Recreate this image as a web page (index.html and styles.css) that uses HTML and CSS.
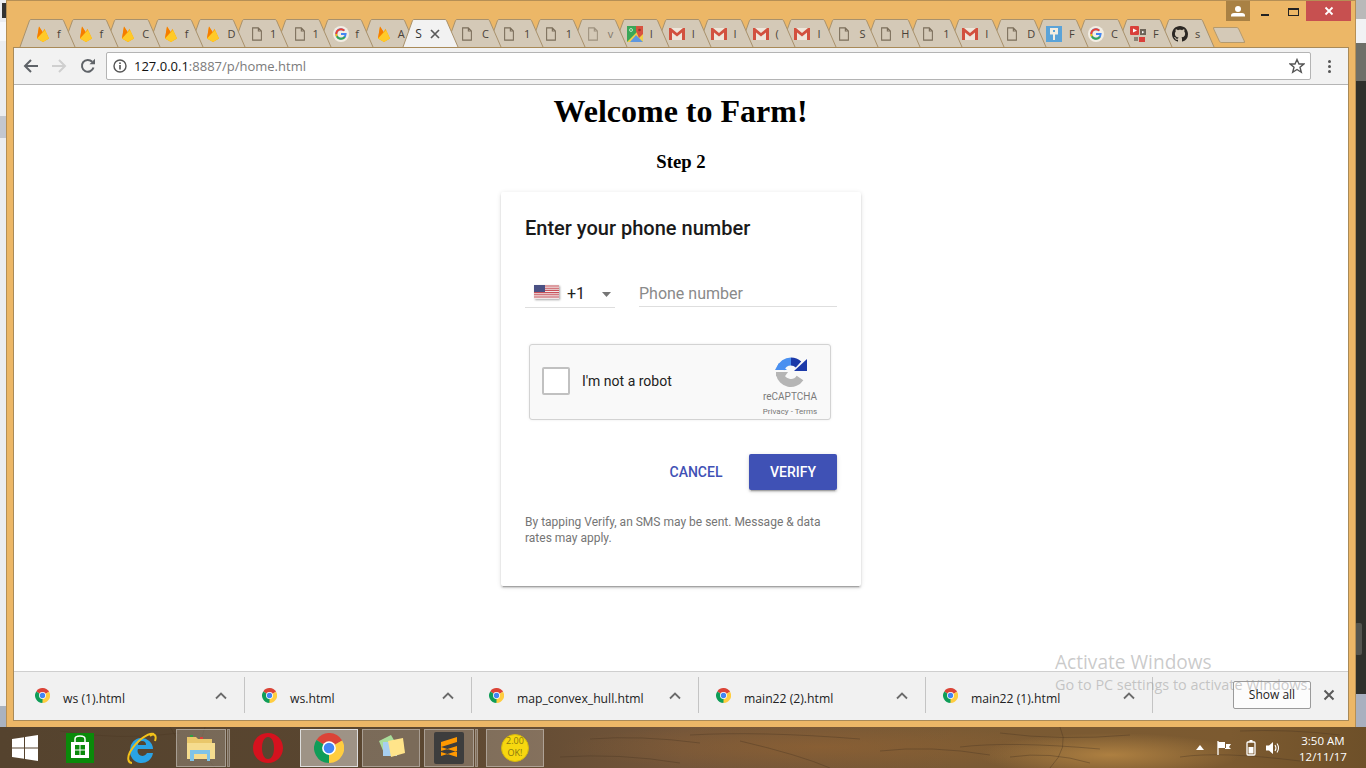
FILE: index.html
```html
<!DOCTYPE html>
<html lang="en">
<head>
<meta charset="utf-8">
<title>Welcome to Farm!</title>
<link rel="stylesheet" href="styles.css">
</head>
<body>
<svg class="defs" width="0" height="0" aria-hidden="true">
  <defs>
    <symbol id="tabshape" viewBox="0 0 58 28">
      <path d="M1 28L10.500 1.500Q11 .5 12 .5H43Q44 .5 44.500 1.500L56 28" />
    </symbol>
    <symbol id="fire" viewBox="0 0 16 20">
      <path d="M.5 15.500L3 .5 7.500 7.500 9.800 3.500 15.500 15.500 8 20Z" fill="#ffa000"/>
      <path d="M.5 15.500L3 .5 7.500 7.500 4 12Z" fill="#f57c00"/>
      <path d="M.5 15.500L10.500 5 15.500 15.500 8 20Z" fill="#ffca28"/>
    </symbol>
    <symbol id="doc" viewBox="0 0 12 16">
      <path d="M1 1H7.500L11 4.500V15H1Z M7.500 1V4.500H11" fill="none" stroke="#7a6d5a" stroke-width="1.200"/>
    </symbol>
    <symbol id="gg" viewBox="0 0 18 18">
      <circle cx="9" cy="9" r="9" fill="#f3eee4"/>
      <path d="M9 9h5.200a5.300 5.300 0 1 1-1.500-3.800" fill="none" stroke="#4285f4" stroke-width="2.200"/>
      <path d="M3.700 9a5.300 5.300 0 0 1 9-3.800" fill="none" stroke="#ea4335" stroke-width="2.200"/>
      <path d="M4.300 11.500a5.300 5.300 0 0 0 9 .8" fill="none" stroke="#34a853" stroke-width="2.200"/>
      <path d="M3.700 9a5.300 5.300 0 0 0 .6 2.500" fill="none" stroke="#fbbc05" stroke-width="2.200"/>
    </symbol>
    <symbol id="gmail" viewBox="0 0 16 12">
      <rect x="0" y="0" width="16" height="12" fill="#eee6da"/>
      <path d="M0 12V0H2L8 5 14 0H16V12H13V4.500L8 8.500 3 4.500V12Z" fill="#d2513f"/>
    </symbol>
    <symbol id="maps" viewBox="0 0 16 16">
      <rect width="16" height="16" fill="#3aa757"/>
      <path d="M0 16L16 0V16Z" fill="#f2cf4a"/>
      <path d="M3 16L9 9 16 16Z" fill="#5e97e0"/>
      <path d="M9 0H16V8L12 12 9 5Z" fill="#d8523f"/>
      <circle cx="12.500" cy="4" r="1.300" fill="#9c3528"/>
      <circle cx="4" cy="4" r="1.500" fill="none" stroke="#d7eed9" stroke-width=".8"/>
    </symbol>
    <symbol id="pblue" viewBox="0 0 16 16">
      <rect width="16" height="16" fill="#5ba3d8"/>
      <path d="M4 2H12V8.500H9V14H7V8.500H4Z" fill="#f4ede0"/>
      <rect x="7" y="4" width="2" height="2" fill="#5ba3d8"/>
    </symbol>
    <symbol id="redbox" viewBox="0 0 16 16">
      <rect x="0" y="0" width="9" height="9" rx="1" fill="#d9403a"/>
      <rect x="10" y="3" width="6" height="6" fill="#6d6458"/>
      <rect x="4" y="11" width="4" height="4" fill="#8a8274"/>
      <rect x="9" y="11" width="6" height="5" fill="#d9403a"/>
      <path d="M3 2.500L7 4.500 3 6.500Z" fill="#fff"/>
      <path d="M12 5L14.500 6 12 7.500Z" fill="#fff"/>
    </symbol>
    <symbol id="github" viewBox="0 0 16 16">
      <path fill="#2b2723" d="M8 0C3.580 0 0 3.580 0 8c0 3.540 2.290 6.530 5.470 7.590.4.070.55-.17.55-.38 0-.19-.01-.82-.01-1.490-2.010.37-2.530-.49-2.690-.94-.09-.23-.48-.94-.82-1.130-.28-.15-.68-.52-.01-.53.63-.01 1.080.58 1.230.82.72 1.210 1.870.87 2.330.66.070-.52.280-.87.510-1.070-1.780-.2-3.640-.89-3.640-3.950 0-.87.310-1.590.82-2.150-.08-.2-.36-1.020.08-2.120 0 0 .67-.21 2.200.82.64-.18 1.320-.27 2-.27s1.360.09 2 .27c1.530-1.040 2.200-.82 2.200-.82.44 1.100.16 1.920.08 2.120.51.56.82 1.270.82 2.150 0 3.070-1.870 3.750-3.650 3.950.29.25.54.73.54 1.480 0 1.070-.01 1.930-.01 2.200 0 .21.15.46.55.38A8.010 8.010 0 0 0 16 8c0-4.420-3.580-8-8-8z"/>
    </symbol>
    <symbol id="chrome" viewBox="0 0 48 48">
      <path d="M24 24 L45 12 A24 24 0 0 0 4 11Z" fill="#db4437"/>
      <path d="M24 24 L4 11 A24 24 0 0 0 24 48 L36 27Z" fill="#0f9d58"/>
      <path d="M24 24 L45 12 A24 24 0 0 1 24 48Z" fill="#ffcd40"/>
      <circle cx="24" cy="24" r="11" fill="#fff"/>
      <circle cx="24" cy="24" r="8.500" fill="#4285f4"/>
    </symbol>
    <symbol id="chev" viewBox="0 0 12 8">
      <path d="M1 6.500L6 1.500 11 6.500" fill="none" stroke="#6b6b6b" stroke-width="1.800"/>
    </symbol>
  </defs>
</svg>

<div class="desktop">
  <div class="strip-left">
    <span class="sl-a"></span><span class="sl-b"></span><span class="sl-c"></span><span class="sl-d"></span>
  </div>
  <div class="strip-right">
    <span class="sr-a"></span><span class="sr-b"></span><span class="sr-c"></span><span class="sr-d"></span><span class="sr-e"></span><span class="sr-f"></span>
  </div>

  <div class="window">
    <div class="captions">
      <span class="cap-user"><svg width="14" height="11" viewBox="0 0 14 11"><circle cx="7" cy="3" r="3" fill="#fff"/><path d="M0 10.500V9.500Q0 7 3 7H11Q14 7 14 9.500V10.500Z" fill="#fff"/></svg></span>
      <span class="cap-min"><svg width="8" height="2" viewBox="0 0 8 2"><rect width="8" height="2" fill="#222"/></svg></span>
      <span class="cap-max"><svg width="11" height="8" viewBox="0 0 11 8"><rect x=".5" y=".5" width="10" height="7" fill="none" stroke="#222"/><rect width="11" height="2" fill="#222"/></svg></span>
      <span class="cap-close"><svg width="10" height="10" viewBox="0 0 10 10"><path d="M1.500 1.500L8.500 8.500M8.500 1.500L1.500 8.500" stroke="#fff" stroke-width="1.800"/></svg></span>
    </div>

    <div class="tabstrip">
      <div class="tab"><svg class="shape"><use href="#tabshape"/></svg><svg class="fav f16"><use href="#fire"/></svg><span class="tt">f</span></div>
      <div class="tab"><svg class="shape"><use href="#tabshape"/></svg><svg class="fav f16"><use href="#fire"/></svg><span class="tt">f</span></div>
      <div class="tab"><svg class="shape"><use href="#tabshape"/></svg><svg class="fav f16"><use href="#fire"/></svg><span class="tt">C</span></div>
      <div class="tab"><svg class="shape"><use href="#tabshape"/></svg><svg class="fav f16"><use href="#fire"/></svg><span class="tt">f</span></div>
      <div class="tab"><svg class="shape"><use href="#tabshape"/></svg><svg class="fav f16"><use href="#fire"/></svg><span class="tt">D</span></div>
      <div class="tab"><svg class="shape"><use href="#tabshape"/></svg><svg class="fav fdoc"><use href="#doc"/></svg><span class="tt">1</span></div>
      <div class="tab"><svg class="shape"><use href="#tabshape"/></svg><svg class="fav fdoc"><use href="#doc"/></svg><span class="tt">1</span></div>
      <div class="tab"><svg class="shape"><use href="#tabshape"/></svg><svg class="fav f16"><use href="#gg"/></svg><span class="tt">f</span></div>
      <div class="tab"><svg class="shape"><use href="#tabshape"/></svg><svg class="fav f16"><use href="#fire"/></svg><span class="tt">A</span></div>
      <div class="tab tab-active"><svg class="shape"><use href="#tabshape"/></svg><span class="tt tt-active">S</span><svg class="tabx" width="10" height="10" viewBox="0 0 10 10"><path d="M1 1L9 9M9 1L1 9" stroke="#5a5a5a" stroke-width="1.700"/></svg></div>
      <div class="tab tab-r"><svg class="shape"><use href="#tabshape"/></svg><svg class="fav fdoc"><use href="#doc"/></svg><span class="tt">C</span></div>
      <div class="tab tab-r"><svg class="shape"><use href="#tabshape"/></svg><svg class="fav fdoc"><use href="#doc"/></svg><span class="tt">1</span></div>
      <div class="tab tab-r"><svg class="shape"><use href="#tabshape"/></svg><svg class="fav fdoc"><use href="#doc"/></svg><span class="tt">1</span></div>
      <div class="tab tab-r tab-faded"><svg class="shape"><use href="#tabshape"/></svg><svg class="fav fdoc"><use href="#doc"/></svg><span class="tt">v</span></div>
      <div class="tab tab-r"><svg class="shape"><use href="#tabshape"/></svg><svg class="fav f16"><use href="#maps"/></svg><span class="tt">I</span></div>
      <div class="tab tab-r"><svg class="shape"><use href="#tabshape"/></svg><svg class="fav f16"><use href="#gmail"/></svg><span class="tt">I</span></div>
      <div class="tab tab-r"><svg class="shape"><use href="#tabshape"/></svg><svg class="fav f16"><use href="#gmail"/></svg><span class="tt">I</span></div>
      <div class="tab tab-r"><svg class="shape"><use href="#tabshape"/></svg><svg class="fav f16"><use href="#gmail"/></svg><span class="tt">(</span></div>
      <div class="tab tab-r"><svg class="shape"><use href="#tabshape"/></svg><svg class="fav f16"><use href="#gmail"/></svg><span class="tt">I</span></div>
      <div class="tab tab-r"><svg class="shape"><use href="#tabshape"/></svg><svg class="fav fdoc"><use href="#doc"/></svg><span class="tt">S</span></div>
      <div class="tab tab-r"><svg class="shape"><use href="#tabshape"/></svg><svg class="fav fdoc"><use href="#doc"/></svg><span class="tt">H</span></div>
      <div class="tab tab-r"><svg class="shape"><use href="#tabshape"/></svg><svg class="fav fdoc"><use href="#doc"/></svg><span class="tt">1</span></div>
      <div class="tab tab-r"><svg class="shape"><use href="#tabshape"/></svg><svg class="fav f16"><use href="#gmail"/></svg><span class="tt">I</span></div>
      <div class="tab tab-r"><svg class="shape"><use href="#tabshape"/></svg><svg class="fav fdoc"><use href="#doc"/></svg><span class="tt">D</span></div>
      <div class="tab tab-r"><svg class="shape"><use href="#tabshape"/></svg><svg class="fav f16"><use href="#pblue"/></svg><span class="tt">F</span></div>
      <div class="tab tab-r"><svg class="shape"><use href="#tabshape"/></svg><svg class="fav f16"><use href="#gg"/></svg><span class="tt">C</span></div>
      <div class="tab tab-r"><svg class="shape"><use href="#tabshape"/></svg><svg class="fav f16"><use href="#redbox"/></svg><span class="tt">F</span></div>
      <div class="tab tab-r"><svg class="shape"><use href="#tabshape"/></svg><svg class="fav f16"><use href="#github"/></svg><span class="tt">s</span></div>
      <div class="newtab"></div>
    </div>

    <div class="client">
      <div class="toolbar">
        <div class="navs">
          <svg width="16" height="16" viewBox="0 0 16 16"><path d="M15 8H2.500M8 2L2 8 8 14" fill="none" stroke="#5f6368" stroke-width="2"/></svg>
          <svg width="16" height="16" viewBox="0 0 16 16"><path d="M1 8H13.500M8 2L14 8 8 14" fill="none" stroke="#cfcfcf" stroke-width="2"/></svg>
          <svg width="16" height="16" viewBox="0 0 16 16"><path d="M13.500 9.500A5.900 5.900 0 1 1 12.200 3.800" fill="none" stroke="#5f6368" stroke-width="2"/><path d="M9.500 6.200H15V.7Z" fill="#5f6368"/></svg>
        </div>
        <div class="omnibox">
          <svg class="info" width="14" height="14" viewBox="0 0 14 14"><circle cx="7" cy="7" r="6" fill="none" stroke="#555" stroke-width="1.400"/><rect x="6.200" y="6" width="1.600" height="4.500" fill="#555"/><rect x="6.200" y="3.400" width="1.600" height="1.600" fill="#555"/></svg>
          <span class="url"><span class="host">127.0.0.1</span>:8887/p/home.html</span>
          <svg class="star" width="16" height="16" viewBox="0 0 16 16"><path d="M8 1.500L10 6H14.800L11 9.200 12.300 14.300 8 11.500 3.700 14.300 5 9.200 1.200 6H6Z" fill="none" stroke="#555" stroke-width="1.400"/></svg>
        </div>
        <div class="menu"><i></i><i></i><i></i></div>
      </div>

      <main class="page">
        <h1 class="title">Welcome to Farm!</h1>
        <h3 class="step">Step 2</h3>
        <section class="card">
          <h2 class="card-title">Enter your phone number</h2>
          <div class="phone-row">
            <div class="country">
              <svg class="flag" width="25" height="14" viewBox="0 0 25 14">
                <rect width="25" height="14" fill="#f0e9e9"/>
                <path d="M0 1H25M0 3.200H25M0 5.400H25M0 7.600H25M0 9.800H25M0 12H25" stroke="#c9525a" stroke-width="1.100"/>
                <rect width="11" height="7" fill="#4a5184"/>
              </svg>
              <span class="code">+1</span>
              <svg class="caret" width="9" height="5" viewBox="0 0 9 5"><path d="M0 0H9L4.500 5Z" fill="#757575"/></svg>
            </div>
            <div class="phone-field">Phone number</div>
          </div>
          <div class="captcha">
            <span class="cbox"></span>
            <span class="robot">I'm not a robot</span>
            <div class="cap-brand">
              <svg class="cap-logo" width="32" height="32" viewBox="0 0 32 32">
                <path d="M5.500 13A11 11 0 0 1 16 5.500" fill="none" stroke="#4a90f0" stroke-width="8"/>
                <path d="M0 14L4 7 12 14Z" fill="#4a90f0"/>
                <path d="M16 5.500A11 11 0 0 1 23.500 8.500" fill="none" stroke="#1c3aa9" stroke-width="8"/>
                <path d="M32 3V15H19Z" fill="#1c3aa9"/>
                <path d="M5 18A11 11 0 0 0 25 22" fill="none" stroke="#b5b5b5" stroke-width="8"/>
                <path d="M1 16H13L8 23 1 20Z" fill="#b5b5b5"/>
              </svg>
              <span class="cap-name">reCAPTCHA</span>
              <span class="cap-links">Privacy - Terms</span>
            </div>
          </div>
          <div class="actions">
            <button class="btn-cancel" type="button">CANCEL</button>
            <button class="btn-verify" type="button">VERIFY</button>
          </div>
          <p class="tos">By tapping Verify, an SMS may be sent. Message &amp; data rates may apply.</p>
        </section>
      </main>

      <footer class="shelf">
        <div class="dl"><svg class="dl-icon"><use href="#chrome"/></svg><span class="dl-name">ws (1).html</span><svg class="dl-chev"><use href="#chev"/></svg></div>
        <div class="dl"><svg class="dl-icon"><use href="#chrome"/></svg><span class="dl-name">ws.html</span><svg class="dl-chev"><use href="#chev"/></svg></div>
        <div class="dl"><svg class="dl-icon"><use href="#chrome"/></svg><span class="dl-name">map_convex_hull.html</span><svg class="dl-chev"><use href="#chev"/></svg></div>
        <div class="dl"><svg class="dl-icon"><use href="#chrome"/></svg><span class="dl-name">main22 (2).html</span><svg class="dl-chev"><use href="#chev"/></svg></div>
        <div class="dl"><svg class="dl-icon"><use href="#chrome"/></svg><span class="dl-name">main22 (1).html</span><svg class="dl-chev"><use href="#chev"/></svg></div>
        <div class="shelf-end">
          <button class="showall" type="button">Show all</button>
          <svg width="12" height="12" viewBox="0 0 12 12"><path d="M1.500 1.500L10.500 10.500M10.500 1.500L1.500 10.500" stroke="#5a5a5a" stroke-width="2"/></svg>
        </div>
      </footer>
    </div>
  </div>

  <div class="watermark">
    <div class="wm-1">Activate Windows</div>
    <div class="wm-2">Go to PC settings to activate Windows.</div>
  </div>

  <div class="taskbar">
    <svg class="grass" width="1366" height="41" viewBox="0 0 1366 41">
      <path d="M170 0Q185 20 178 41M205 0Q195 20 215 41M60 4Q120 14 180 6M690 8Q760 4 860 12M740 14Q800 28 830 41M1000 6Q1060 14 1130 8M960 20Q1010 14 1100 22M1240 4Q1290 2 1340 8M1180 30Q1220 24 1300 34M1060 0Q1070 20 1050 41M590 12Q640 8 700 16M880 24Q930 18 990 28M560 30Q620 26 680 36M1010 30Q1050 24 1090 36" fill="none" stroke="#4a3722" stroke-width="1" opacity=".4"/>
    </svg>
    <div class="tb-start"><svg width="26" height="26" viewBox="0 0 26 26"><path d="M0 4L12 2.300V12.400H0ZM13 2.100L26 0V12.400H13ZM0 13.500H12V23.700L0 22ZM13 13.500H26V26L13 23.900Z" fill="#fff"/></svg></div>
    <div class="tb-item tb-store"><svg width="29" height="30" viewBox="0 0 28 30"><rect width="28" height="30" fill="#0a8a0a"/><path d="M9 9V6Q9 3 14 3T19 6V9" fill="none" stroke="#fff" stroke-width="1.500"/><path d="M5 9H23V25H5Z" fill="#fff"/><path d="M9 12H13.500V16.500H9ZM14.500 12H19V16.500H14.500ZM9 17.500H13.500V22H9ZM14.500 17.500H19V22H14.500Z" fill="#0a8a0a"/></svg></div>
    <div class="tb-item tb-ie"><svg width="30" height="32" viewBox="0 0 30 32"><path d="M3 18A11.500 11.500 0 0 1 26 17H11A4.500 4.500 0 0 0 20 21H26A11.500 11.500 0 0 1 3 18Z M11 13H19A4 4 0 0 0 11 13Z" fill="#2aa3e6" fill-rule="evenodd"/><path d="M27 2C22 0 10 8 3 20 0 26 1 31 5 31" fill="none" stroke="#f3c21a" stroke-width="2"/><path d="M23 4C27 1 30 3 28 9" fill="none" stroke="#f3c21a" stroke-width="2"/></svg></div>
    <div class="tb-btn tb-explorer"><svg width="30" height="30" viewBox="0 0 30 30"><path d="M1 4H10L12 6H26V22H1Z" fill="#e9c76a"/><rect x="4" y="2" width="3" height="2" fill="#2f9e44"/><rect x="14" y="4" width="3" height="2" fill="#d9403a"/><path d="M1 10H29V26H1Z" fill="#f5dc8e"/><path d="M4 17H24V28H21V21H8V28H4Z" fill="#7ec3e8"/></svg></div>
    <span class="tb-tick"></span>
    <div class="tb-item tb-opera"><svg width="30" height="32" viewBox="0 0 30 32"><path d="M15 1C6 1 0 8 0 16S6 31 15 31 30 24 30 16 24 1 15 1ZM15 5C19 5 21 10 21 16S19 27 15 27 9 22 9 16 11 5 15 5Z" fill="#d5121e" fill-rule="evenodd"/></svg></div>
    <div class="tb-btn tb-active"><svg width="30" height="30"><use href="#chrome"/></svg></div>
    <div class="tb-btn tb-notes"><svg width="30" height="26" viewBox="0 0 30 26"><path d="M3 6L15 0 22 12 8 18Z" fill="#a9dd9a"/><rect x="7" y="7" width="14" height="14" fill="#a8cff0"/><path d="M12 6L27 3 29 18 15 22Z" fill="#ffe48a"/></svg></div>
    <div class="tb-btn tb-sublime"><svg width="30" height="32" viewBox="0 0 30 32"><rect width="30" height="32" rx="2" fill="#3d3d3d"/><path d="M7 10L23 5V10L7 15ZM7 15L23 20V25L7 20ZM23 14L7 19V24L23 19Z" fill="#ff9800"/></svg></div>
    <span class="tb-tick"></span>
    <div class="tb-btn tb-ok"><span class="ok-coin">2.00<br>OK!</span></div>
    <div class="tray">
      <svg width="8" height="5" viewBox="0 0 8 5"><path d="M0 5L4 0 8 5Z" fill="#fff"/></svg>
      <svg width="16" height="14" viewBox="0 0 16 14"><path d="M2 0V14" stroke="#fff" stroke-width="1.300"/><path d="M2 1H9V7H2ZM10 3H15L13 6 15 8H9V7H10Z" fill="#fff"/></svg>
      <svg class="tray-batt" width="10" height="16" viewBox="0 0 10 16"><rect x="1" y="2" width="8" height="13" rx="1" fill="none" stroke="#fff" stroke-width="1.300"/><rect x="3.500" y="0" width="3" height="2" fill="#fff"/><rect x="2.500" y="7" width="5" height="6.500" fill="#fff"/></svg>
      <svg width="15" height="14" viewBox="0 0 15 14"><path d="M0 4.500H3L7 1V13L3 9.500H0Z" fill="#fff"/><path d="M9 4Q11 7 9 10M11 2.500Q14 7 11 11.500" fill="none" stroke="#fff" stroke-width="1.100"/></svg>
      <div class="clock"><span>3:50 AM</span><span>12/11/17</span></div>
    </div>
  </div>
</div>
</body>
</html>
```

FILE: styles.css
```css
* { box-sizing: border-box; }
html, body { margin: 0; padding: 0; width: 1366px; height: 768px; overflow: hidden; }
body { font-family: "Roboto", sans-serif; background: #eef0f4; }
.defs { position: absolute; }

.desktop { position: relative; width: 1366px; height: 768px; overflow: hidden; background: #f0f1f4; }

/* desktop slivers visible round the window */
.strip-left { position: absolute; left: 0; top: 0; width: 7px; height: 727px; background: #ebedf1; }
.strip-left span { position: absolute; display: block; }
.sl-a { left: 2px; top: 3px; width: 5px; height: 15px; background: #333; }
.sl-b { left: 0; top: 22px; width: 7px; height: 19px; background: #f7f8fa; }
.sl-c { left: 0; top: 116px; width: 7px; height: 22px; background: #c3c7d0; }
.sl-d { left: 0; top: 706px; width: 7px; height: 21px; background: #a9b2c0; }

.strip-right { position: absolute; right: 0; top: 0; width: 11px; height: 727px; background: #f4f5f7; }
.strip-right span { position: absolute; display: block; left: 0; width: 11px; }
.sr-a { top: 0; height: 19px; background: #b9b9b9; }
.sr-b { top: 19px; height: 24px; background: #f1f2f4; }
.sr-c { top: 43px; height: 38px; background: #6e6f68; }
.sr-d { top: 81px; height: 613px; background: #2f302b; }
.strip-right .sr-e { top: 623px; height: 32px; width: 7px; background: #54554f; border-radius: 2px; }
.sr-f { top: 694px; height: 33px; background: #a9b0bf; }

/* window */
.window {
  position: absolute; left: 6px; top: 0; width: 1350px; height: 728px;
  background: #ecb767; border: 1px solid #b58f55; border-bottom-color: #d8a358;
}
.captions { position: absolute; right: 4px; top: 0; display: flex; height: 20px; z-index: 60; }
.cap-user { width: 24px; height: 20px; background: #a98144; display: flex; align-items: center; justify-content: center; }
.cap-min { width: 30px; height: 20px; display: flex; align-items: flex-end; justify-content: center; padding-bottom: 5px; }
.cap-max { width: 26px; height: 20px; display: flex; align-items: center; justify-content: center; padding-top: 2px; }
.cap-close { width: 45px; height: 20px; background: #c75050; display: flex; align-items: center; justify-content: center; }

.tabstrip { display: flex; position: absolute; left: 12px; top: 18px; height: 28px; z-index: 2; }
.tab { position: relative; width: 42.6px; height: 28px; flex: none; }
.tab-r { width: 41.95px; }
.shape { position: absolute; left: 0; top: 0; width: 58px; height: 28px; fill: #d4c9b7; stroke: #a8916c; stroke-width: 1; }
.tab:nth-child(1) { z-index: 40; } .tab:nth-child(2) { z-index: 39; } .tab:nth-child(3) { z-index: 38; }
.tab:nth-child(4) { z-index: 37; } .tab:nth-child(5) { z-index: 36; } .tab:nth-child(6) { z-index: 35; }
.tab:nth-child(7) { z-index: 34; } .tab:nth-child(8) { z-index: 33; } .tab:nth-child(9) { z-index: 32; }
.tab:nth-child(10) { z-index: 50; } .tab:nth-child(11) { z-index: 30; } .tab:nth-child(12) { z-index: 29; }
.tab:nth-child(13) { z-index: 28; } .tab:nth-child(14) { z-index: 27; } .tab:nth-child(15) { z-index: 26; }
.tab:nth-child(16) { z-index: 25; } .tab:nth-child(17) { z-index: 24; } .tab:nth-child(18) { z-index: 23; }
.tab:nth-child(19) { z-index: 22; } .tab:nth-child(20) { z-index: 21; } .tab:nth-child(21) { z-index: 20; }
.tab:nth-child(22) { z-index: 19; } .tab:nth-child(23) { z-index: 18; } .tab:nth-child(24) { z-index: 17; }
.tab:nth-child(25) { z-index: 16; } .tab:nth-child(26) { z-index: 15; } .tab:nth-child(27) { z-index: 14; }
.tab:nth-child(28) { z-index: 13; }
.tab-active .shape { fill: #f2f2f2; }
.tab-faded .fav, .tab-faded .tt { opacity: .6; }
.fav { position: absolute; }
.f16 { left: 16px; width: 16px; height: 16px; top: 7px; }
.fdoc { left: 19px; top: 8px; width: 12px; height: 14px; }
.tab-r .f16 { left: 14px; }
.tab-r .fdoc { left: 16px; }
.tt { position: absolute; left: 38px; top: 7px; font: 11px/16px "Open Sans", sans-serif; color: #4a4238; }
.tab-r .tt { left: 37px; }
.tab .tt-active { left: 13px; font-size: 12px; color: #333; }
.tabx { position: absolute; left: 28px; top: 10px; }
.newtab {
  position: relative; z-index: 1; flex: none; width: 26px; height: 16px; margin-left: 16px; margin-top: 8px;
  background: #d4c9b7; border: 1px solid #b49a6e; border-radius: 2px; transform: skewX(25deg);
}

/* client */
.client {
  position: absolute; left: 6px; top: 46px; width: 1336px; height: 674px;
  display: flex; flex-direction: column; background: #fff;
  border: 1px solid #a98a58;
}
.toolbar {
  position: relative; z-index: 3; flex: none; height: 37px; background: #f2f2f2; border-bottom: 1px solid #b5b5b5;
  display: flex; align-items: center; padding: 0 0 0 9px;
}
.navs { display: flex; gap: 12px; width: 83px; flex: none; }
.navs svg:last-child { margin-left: 1px; }
.omnibox {
  flex: none; width: 1205px; height: 28px; background: #fff; border: 1px solid #b4b4b4; border-radius: 2px;
  display: flex; align-items: center; padding: 0 5px 0 6px;
}
.info { flex: none; margin-right: 7px; }
.url { flex: 1; font: 13px/20px "Open Sans", sans-serif; color: #7b7b7b; white-space: nowrap; }
.host { color: #111; }
.star { flex: none; }
.menu { display: flex; flex-direction: column; gap: 2px; margin-left: 17px; }
.menu i { display: block; width: 3px; height: 3px; border-radius: 50%; background: #555; }

.page { flex: 1; min-height: 0; background: #fff; display: flex; flex-direction: column; align-items: center; }
.title { margin: 8px 1px 0 0; font: bold 32px/37px "Liberation Serif", serif; color: #000; }
.step { margin: 21px 0 0; font: bold 18.720px/22px "Liberation Serif", serif; color: #000; }
.card {
  margin-top: 19px; width: 360px; height: 394px; padding: 24px; background: #fff; border-radius: 2px;
  box-shadow: 0 2px 2px 0 rgba(0,0,0,.14), 0 3px 1px -2px rgba(0,0,0,.2), 0 1px 5px 0 rgba(0,0,0,.12);
}
.card-title { margin: 0; font: 500 20px/24px "Roboto", sans-serif; color: #1a1a1a; }
.phone-row { display: flex; gap: 24px; margin-top: 38px; height: 30px; }
.country {
  width: 90px; height: 29px; margin-top: 1px; border-bottom: 1px solid #dedede; display: flex; align-items: center; padding-left: 9px;
}
.flag { flex: none; box-shadow: 1px 1px 2px rgba(0,0,0,.35); margin-top: -3px; }
.code { margin-left: 8px; font: 16px/20px "Roboto", sans-serif; color: #222; margin-top: 1px; }
.caret { margin-left: 17px; margin-top: 3px; }
.phone-field {
  width: 198px; height: 29px; padding-top: 2px; border-bottom: 1px solid #dedede; font: 16px/28px "Roboto", sans-serif; color: #8a8a8a;
}
.captcha {
  position: relative; margin: 36px 0 0 4px; width: 302px; height: 76px; background: #f9f9f9; border: 1px solid #d3d3d3; border-radius: 3px;
  box-shadow: 0 0 3px rgba(0,0,0,.08); display: flex; align-items: center; padding-bottom: 2px;
}
.cbox { flex: none; width: 28px; height: 28px; margin-left: 12px; background: #fff; border: 2px solid #c1c1c1; border-radius: 2px; }
.robot { margin-left: 12px; font: 14px/18px "Roboto", sans-serif; color: #222; }
.cap-brand {
  position: absolute; right: 12px; top: 11px; width: 56px; display: flex; flex-direction: column; align-items: center;
}
.cap-logo { margin-left: 2px; }
.cap-name { margin-top: 3px; font: 10px/12px "Roboto", sans-serif; color: #7b7b7b; }
.cap-links { margin-top: 4px; font: 8px/10px "Roboto", sans-serif; color: #777; white-space: nowrap; }
.actions { display: flex; justify-content: flex-end; align-items: center; margin-top: 34px; height: 36px; }
.btn-cancel, .btn-verify { font: 500 14px/36px "Roboto", sans-serif; height: 36px; padding: 0 0 1px; border: 0; border-radius: 2px; }
.btn-cancel { background: transparent; color: #3f51b5; width: 70px; margin-right: 18px; }
.btn-verify { width: 88px; background: #3f51b5; color: #fff; box-shadow: 0 2px 2px 0 rgba(0,0,0,.14), 0 3px 1px -2px rgba(0,0,0,.2), 0 1px 5px 0 rgba(0,0,0,.12); }
.tos { margin: 24px 0 0; font: 12px/16px "Roboto", sans-serif; color: #757575; }

/* download shelf */
.shelf {
  flex: none; height: 49px; background: #f1f1f1; border-top: 1px solid #cfcfcf; display: flex; align-items: center; padding-left: 4px; position: relative; padding-bottom: 3px;
}
.dl { position: relative; flex: none; width: 227px; height: 36px; border-right: 1px solid #c4c4c4; display: flex; align-items: center; }
.dl-icon { position: absolute; left: 17px; top: 11px; width: 15px; height: 15px; }
.dl-name { position: absolute; left: 45px; top: 13px; font: 12.200px/18px "Open Sans", sans-serif; color: #222; white-space: nowrap; }
.dl-chev { position: absolute; left: 197px; top: 15px; width: 12px; height: 8px; }
.shelf-end { display: flex; align-items: center; gap: 12px; margin-left: 80px; }
.showall { width: 78px; height: 28px; padding: 0; background: #fcfcfc; border: 1px solid #9a9a9a; border-radius: 2px; font: 12px/24px "Open Sans", sans-serif; color: #222; }

/* watermark */
.watermark { position: absolute; left: 1055px; top: 650px; z-index: 20; pointer-events: none; font-family: "Open Sans", sans-serif; color: rgba(150,150,150,.5); white-space: nowrap; }
.wm-1 { font-size: 19.100px; line-height: 25px; }
.wm-2 { font-size: 14.400px; line-height: 20px; }

/* taskbar */
.taskbar {
  position: absolute; left: 0; top: 727px; width: 1366px; height: 41px; display: flex; align-items: center;
  background:
    radial-gradient(ellipse 130px 22px at 1110px 28px, rgba(190,140,70,.75), rgba(190,140,70,0) 100%),
    radial-gradient(ellipse 260px 24px at 820px 20px, rgba(150,100,50,.55), rgba(150,100,50,0) 100%),
    linear-gradient(90deg, #55432e 0%, #5a4630 30%, #74563a 50%, #7a5a34 70%, #7c5a30 90%, #6e5029 100%);
}
.grass { position: absolute; left: 0; top: 0; }
.tb-start { position: relative; width: 26px; margin-left: 12px; height: 26px; flex: none; margin-right: 28px; }
.tb-start svg { display: block; }
.tb-item { position: relative; flex: none; display: flex; justify-content: center; }
.tb-store { width: 28px; margin-right: 32px; }
.tb-ie { width: 32px; margin-right: 18px; }
.tb-btn {
  position: relative; flex: none; height: 38px; display: flex; align-items: center; justify-content: center;
  background: rgba(255,255,255,.2); border: 1px solid rgba(255,255,255,.35);
}
.tb-explorer { width: 50px; }
.tb-tick { position: relative; flex: none; width: 3px; height: 38px; margin: 0 8px 0 1px; background: rgba(255,255,255,.2); border: 1px solid rgba(255,255,255,.25); }
.tb-opera { width: 32px; margin: 0 16px 0 14px; }
.tb-active { width: 58px; background: rgba(255,255,255,.42); border-color: #ddd; margin-right: 4px; }
.tb-notes { width: 58px; margin-right: 4px; }
.tb-sublime { width: 50px; }
.tb-ok { width: 58px; }
.ok-coin {
  width: 28px; height: 28px; border-radius: 50%; background: #f7d70f; color: #8a7a10; font: 9px/12.500px "Open Sans", sans-serif; text-align: center; padding-top: 0; border: 1px solid #d5b80c;
}
.tray { position: absolute; left: 1196px; top: 0; height: 41px; width: 170px; display: flex; align-items: center; gap: 12px; }
.tray-batt { margin-left: 2px; margin-right: -2px; }
.clock { display: flex; flex-direction: column; align-items: center; margin: 3px 0 0 6px; font: 11.500px/16px "Open Sans", sans-serif; color: #fff; }
```
